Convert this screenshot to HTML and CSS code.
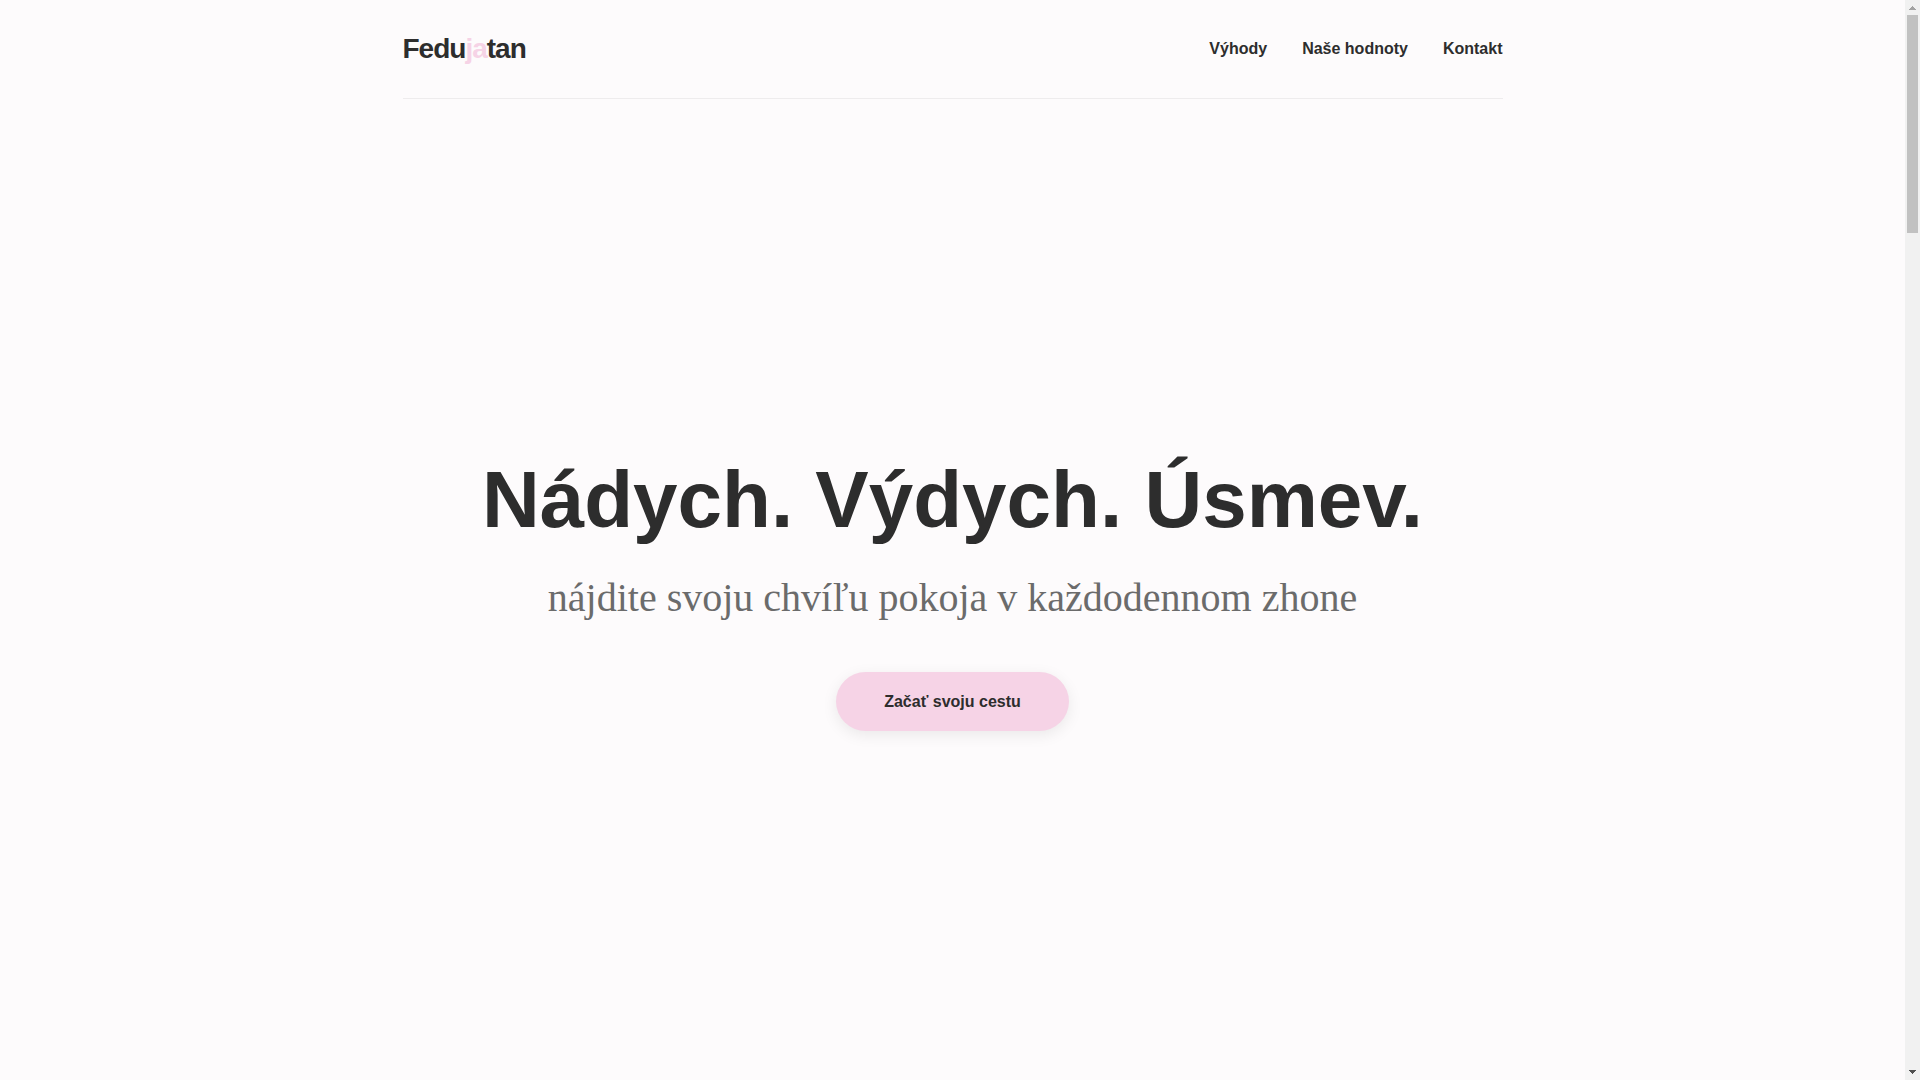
FILE: index.html
```html
<!DOCTYPE html>
<html lang="sk">
<head>
    <meta charset="UTF-8">
    <meta name="viewport" content="width=device-width, initial-scale=1.0">
    <title>Fedujatan</title>
    <link rel="stylesheet" href="styles.css">
</head>
<body>
    <div class="page">
        <div class="container">
            <header class="header">
                <a href="#" class="logo">Fedu<span class="logo-accent">ja</span>tan</a>
                <nav class="nav">
                    <a href="#vyhody">Výhody</a>
                    <a href="#hodnoty">Naše hodnoty</a>
                    <a href="#kontakt">Kontakt</a>
                </nav>
            </header>

            <main class="hero">
                <h1>Nádych. Výdych. Úsmev.</h1>
                <p class="subtitle">nájdite svoju chvíľu pokoja v každodennom zhone</p>
                <a href="#vyhody" class="btn">Začať svoju cestu</a>
            </main>
        </div>
    </div>

    <div class="scrollbar" aria-hidden="true">
        <svg class="scroll-arrow" viewBox="0 0 15 15" shape-rendering="crispEdges"><path d="M4 10V9h1V8h1V7h1V6h1v1h1v1h1v1h1v1z" fill="#a3a3a3"/></svg>
        <div class="scroll-track">
            <div class="scroll-thumb"></div>
        </div>
        <svg class="scroll-arrow" viewBox="0 0 15 15" shape-rendering="crispEdges"><path d="M4 5h7v1h-1v1H9v1H8v1H7V8H6V7H5V6H4z" fill="#505050"/></svg>
    </div>
</body>
</html>
```
FILE: styles.css
```css
* {
    box-sizing: border-box;
    margin: 0;
    padding: 0;
}
body {
    display: flex;
    height: 100vh;
    font-family: "Liberation Sans", Arial, sans-serif;
    line-height: 27px;
    background-color: #fdfbfc;
    color: #2d2d2d;
}
a {
    color: inherit;
    text-decoration: none;
}
.page {
    flex: 1;
    overflow: hidden;
}
.container {
    max-width: 1100px;
    margin: 0 auto;
}

/* Header */
.header {
    display: flex;
    justify-content: space-between;
    align-items: center;
    padding: 25px 0;
    border-bottom: 1px solid #eeeced;
}
.logo {
    font-size: 28px;
    font-weight: bold;
    line-height: 48px;
    letter-spacing: -1px;
}
.logo-accent {
    color: #f6d3e6;
}
.nav {
    display: flex;
    gap: 35px;
    font-weight: bold;
    line-height: 26px;
}

/* Hero */
.hero {
    display: flex;
    flex-direction: column;
    justify-content: center;
    align-items: center;
    min-height: 90vh;
    padding-top: 16px;
    text-align: center;
}
.hero h1 {
    font-size: 80px;
    line-height: 88px;
    margin-bottom: 20px;
}
.subtitle {
    font-family: "Liberation Serif", "Times New Roman", serif;
    font-size: 40px;
    line-height: 68px;
    color: #6b6b6b;
    margin-bottom: 40px;
}
.btn {
    background-color: #f6d3e6;
    padding: 16px 48px;
    border-radius: 50px;
    font-weight: bold;
    box-shadow: 0 4px 15px rgba(0, 0, 0, 0.08);
}

/* Scrollbar */
.scrollbar {
    display: flex;
    flex-direction: column;
    width: 15px;
    background-color: #f1f1f1;
}
.scroll-arrow {
    display: block;
    width: 15px;
    height: 15px;
}
.scroll-track {
    flex: 1;
    padding: 0 2px;
}
.scroll-thumb {
    height: 218px;
    background-color: #c1c1c1;
}
```
